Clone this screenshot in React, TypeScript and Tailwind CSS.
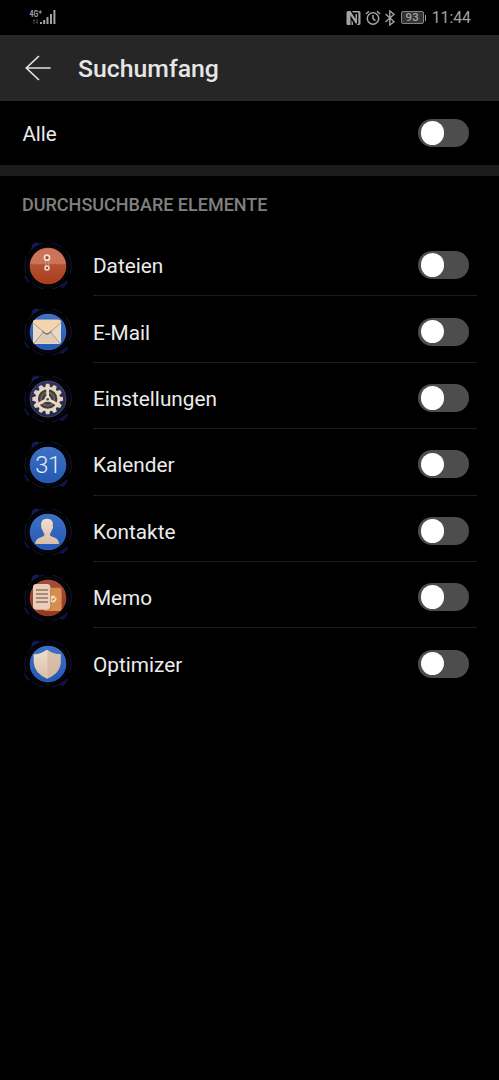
import React from "react";

function Ring({ id, disc, children }: { id: string; disc: [string, string]; children: React.ReactNode }) {
  return (
    <svg viewBox="0 0 192 192" className="size-16 shrink-0" aria-hidden="true">
      <defs>
        <linearGradient id={`disc-${id}`} x1="0" y1="0" x2="0" y2="1">
          <stop offset="0" stopColor={disc[0]} />
          <stop offset="1" stopColor={disc[1]} />
        </linearGradient>
        <linearGradient id={`cream-${id}`} x1="0" y1="0" x2="0" y2="1">
          <stop offset="0" stopColor="#f1dfce" />
          <stop offset="1" stopColor="#d9bda6" />
        </linearGradient>
      </defs>
      <path d="M46 46L48 32Q58 22 70 27L66 36Q54 38 46 46Z" fill="#141a56" />
      <path d="M126 157L146 136L156 142Q150 158 140 162Z" fill="#0e133f" />
      <path d="M22 122L31 126L44 148L32 143Z" fill="#0c1034" />
      <circle cx="96" cy="96" r="70" fill="#010104" />
      <path d="M84 27A70 70 0 0 0 37 59M30 73A70 70 0 0 0 31 121M49 148A70 70 0 0 0 84 165M108 27A70 70 0 0 1 139 41" fill="none" stroke="#151a46" strokeWidth="2.5" />
      <path d="M148 49A70 70 0 0 1 161 122M143 148A70 70 0 0 1 108 165" fill="none" stroke="#121638" strokeWidth="3" />
      <circle cx="96" cy="96" r="61" fill="none" stroke="#101019" strokeWidth="2" />
      <circle cx="96" cy="96" r="55" fill={`url(#disc-${id})`} />
      {children}
    </svg>
  );
}

const BLUE: [string, string] = ["#3f72c6", "#2258b3"];
const RUST: [string, string] = ["#bf6146", "#a93d1c"];

function FilesIcon() {
  return (
    <Ring id="files" disc={RUST}>
      <path d="M42 88A55 55 0 0 1 150 88Q148 91 144 91H48Q44 91 42 88Z" fill="#cc745a" />
      <path d="M44 89Q46 91 50 91H142Q147 91 149 89" fill="none" stroke="#b45b40" strokeWidth="1.5" />
      <path d="M89 76V99M98 76V99" stroke="#d9a58d" strokeWidth="2" />
      <circle cx="93" cy="71" r="7.5" fill="#97503a" stroke="#f2e3d0" strokeWidth="5" />
      <circle cx="93" cy="102" r="6" fill="#97503a" stroke="#f2e3d0" strokeWidth="4.5" />
    </Ring>
  );
}

function MailIcon() {
  return (
    <Ring id="mail" disc={BLUE}>
      <rect x="51" y="59" width="84" height="73" rx="8" fill="#ebd8c5" />
      <path d="M53 130L82 94L93 103L104 94L133 130Z" fill="#e0cab8" />
      <path d="M51 68Q51 59 60 59H126Q135 59 135 68L100 99Q93 105 86 99Z" fill="#f2d4ad" />
      <path d="M52 69L86 99Q93 105 100 99L134 69M54 130L82 96M132 130L104 96" fill="none" stroke="#927e73" strokeWidth="2" />
      <path d="M79 93L87 100Q93 105 99 100L107 93" fill="none" stroke="#4b5877" strokeWidth="3" />
    </Ring>
  );
}

function GearIcon() {
  const teeth = Array.from({ length: 12 }, (_, i) => i * 30);
  return (
    <Ring id="gear" disc={["#30345a", "#22274d"]}>
      <circle cx="96" cy="96" r="54" fill="none" stroke="#4a4b69" strokeWidth="2" />
      {teeth.map((a) => (
        <path key={a} d="M87 62L90 50H100L103 62Z" fill="#e4d2c0" transform={`rotate(${a} 95 96)`} />
      ))}
      <circle cx="95" cy="96" r="33" fill="#423d3d" stroke="#e8d6c4" strokeWidth="7.5" />
      <circle cx="95" cy="96" r="20" fill="none" stroke="#6a625c" strokeWidth="5" />
      <path d="M95 96V65M95 96L68 111M95 96L122 111" stroke="#ecdccb" strokeWidth="8" />
      <circle cx="95" cy="96" r="9" fill="#ecdccb" />
      <circle cx="95" cy="97" r="4" fill="#554b46" />
    </Ring>
  );
}

function CalendarIcon() {
  return (
    <Ring id="calendar" disc={BLUE}>
      <text x="58 96" y="120" fontSize="71" fontWeight="300" fill="#e7edf5" className="font-[Roboto,sans-serif]">31</text>
    </Ring>
  );
}

function ContactIcon() {
  return (
    <Ring id="contact" disc={BLUE}>
      <path d="M93 56C79 56 73 66 76 79C74 81 77 88 80 91C81 96 83 99 85 101V106Q84 109 75 112Q58 117 57 132H129Q129 117 113 112Q103 109 102 106V101C104 99 106 96 107 91C110 88 113 81 110 79C113 66 107 56 93 56Z" fill="url(#cream-contact)" />
    </Ring>
  );
}

function MemoIcon() {
  return (
    <Ring id="memo" disc={["#a84e3b", "#903923"]}>
      <rect x="82" y="65" width="55" height="70" rx="8" fill="#d98c4d" />
      <rect x="51" y="54" width="52" height="77" rx="10" fill="#e8cfbb" />
      <path d="M102 68Q105 74 105 121Q104 131 94 133" fill="none" stroke="#ad6f49" strokeWidth="2" />
      <path d="M60 72H96M60 84H96M60 96H96M60 108H96" stroke="#6d443b" strokeWidth="3.5" />
      <path d="M105 91A10 10 0 1 1 105 107Z" fill="#f1dbc3" />
      <path d="M107 99L111 103L117 94" fill="none" stroke="#b16e40" strokeWidth="3" />
    </Ring>
  );
}

function ShieldIcon() {
  return (
    <Ring id="shield" disc={BLUE}>
      <path d="M93 53Q108 65 134 67V91Q133 124 93 140Q55 124 53 91V67Q77 65 93 53Z" fill="url(#cream-shield)" />
      <path d="M93 53Q108 65 134 67V91Q133 124 93 140Z" fill="#cdb09a" opacity=".6" />
      <path d="M93 54V139" stroke="#eddac8" strokeWidth="1.5" />
    </Ring>
  );
}

function Toggle() {
  return (
    <button type="button" role="switch" aria-checked="false" className="flex h-7 w-[51px] shrink-0 items-center rounded-full bg-[#4d4d4d] pl-[2.5px]">
      <span className="size-[23.5px] rounded-full bg-white" />
    </button>
  );
}

const ITEMS = [
  { label: "Dateien", Icon: FilesIcon },
  { label: "E-Mail", Icon: MailIcon },
  { label: "Einstellungen", Icon: GearIcon },
  { label: "Kalender", Icon: CalendarIcon },
  { label: "Kontakte", Icon: ContactIcon },
  { label: "Memo", Icon: MemoIcon },
  { label: "Optimizer", Icon: ShieldIcon },
];

function StatusBar() {
  return (
    <div className="flex h-[35px] items-center justify-between pr-7 pl-[29px] text-[#a3a3a3]">
      <svg viewBox="0 0 28 18" className="mb-px h-[18px] w-7" fill="currentColor">
        <text transform="translate(0.5 9) scale(0.72 1)" fontSize="9.5" fontWeight="700" className="font-[Roboto,sans-serif]">4G</text>
        <path d="M9.5 3.5h1.2V2.3h1v1.2h1.2v1h-1.2v1.2h-1V4.5H9.5z" />
        <path d="M5 11L3.5 13H4.5V16H5.5V13H6.5ZM8 16L6.5 14H7.5V11H8.5V14H9.5Z" fill="#4a4a4a" />
        <path d="M11 14h2v2H11zM14.2 12h2v4h-2zM17.5 9h2v7h-2zM21 6h2v10H21zM24.4 2h2v14h-2z" />
      </svg>
      <div className="flex items-center">
        <svg viewBox="0 0 15 16" className="h-4 w-[15px]" fill="currentColor">
          <path d="M2 1H4.5L9.5 9V4H11V13.5H9.7L4.5 5.5V15H2Q.5 15 .5 13.5V2.5Q.5 1 2 1Z" />
          <path d="M6 1H13Q14.500 1 14.500 2.500V13.500Q14.500 15 13 15H10.500L12.300 13.500V2.500H7Z" />
          <path d="M5.500 10L7 12.500V15H5.500Z" />
        </svg>
        <svg viewBox="0 0 16 16" className="ml-1 size-4" fill="none" stroke="currentColor" strokeWidth="1.5">
          <circle cx="8" cy="8.5" r="5.7" />
          <path d="M8 5V8.7L10.4 10.6M1 4L4 1.2M15 4L12 1.2" />
        </svg>
        <svg viewBox="0 0 12 16" className="ml-[3px] h-4 w-3" fill="none" stroke="currentColor" strokeWidth="1.4">
          <path d="M1.5 4L10 11.7L5.8 15V1L10 4.3L1.5 12" />
        </svg>
        <div className="ml-[5px] flex h-[13px] w-[23px] items-center justify-center rounded-[2px] border border-[#858585] bg-[#343434] font-['Roboto',sans-serif] text-[11.5px] leading-none font-medium">93</div>
        <span className="ml-px h-1.5 w-[1.5px] bg-[#a3a3a3]" />
        <span className="ml-[5.5px] font-['Roboto',sans-serif] text-[15.8px] leading-none whitespace-nowrap">11:44</span>
      </div>
    </div>
  );
}

export default function App() {
  return (
    <main className="flex min-h-[1080px] w-full flex-col bg-black font-['Roboto',sans-serif] text-[#ececec]">
      <StatusBar />
      <header className="flex h-[66px] items-center bg-[#262626] pl-[25px]">
        <svg viewBox="0 0 27 27" className="size-[27px]" fill="none" stroke="#e2e2e2" strokeWidth="1.7">
          <path d="M14 1L1.3 13L14 25M1.3 13H25.7" />
        </svg>
        <h1 className="ml-[26px] pt-0.5 text-[24.8px] leading-none font-medium text-[#e6e6e6]">Suchumfang</h1>
      </header>
      <div className="flex h-16 items-center justify-between pr-[30px] pl-[22.5px]">
        <span className="pt-[1.5px] text-[20.5px] leading-none">Alle</span>
        <Toggle />
      </div>
      <div className="h-[11px] bg-[#1c1c1c]" />
      <section>
        <h2 className="h-[54px] pt-[18.5px] pl-[22px] text-[18px] leading-5 font-medium text-[#808080]">DURCHSUCHBARE ELEMENTE</h2>
        <ul>
          {ITEMS.map(({ label, Icon }, i) => (
            <li key={label} className="flex h-[66.4px] pl-4">
              <div className="pt-1"><Icon /></div>
              <div className={i < ITEMS.length - 1 ? "mr-[22px] ml-[13px] flex grow items-center justify-between border-b border-[#1d1d1d] pt-[5px] pr-2" : "mr-[22px] ml-[13px] flex grow items-center justify-between pt-1 pr-2"}>
                <span className="pt-[3px] text-[20.75px] leading-none">{label}</span>
                <Toggle />
              </div>
            </li>
          ))}
        </ul>
      </section>
    </main>
  );
}
